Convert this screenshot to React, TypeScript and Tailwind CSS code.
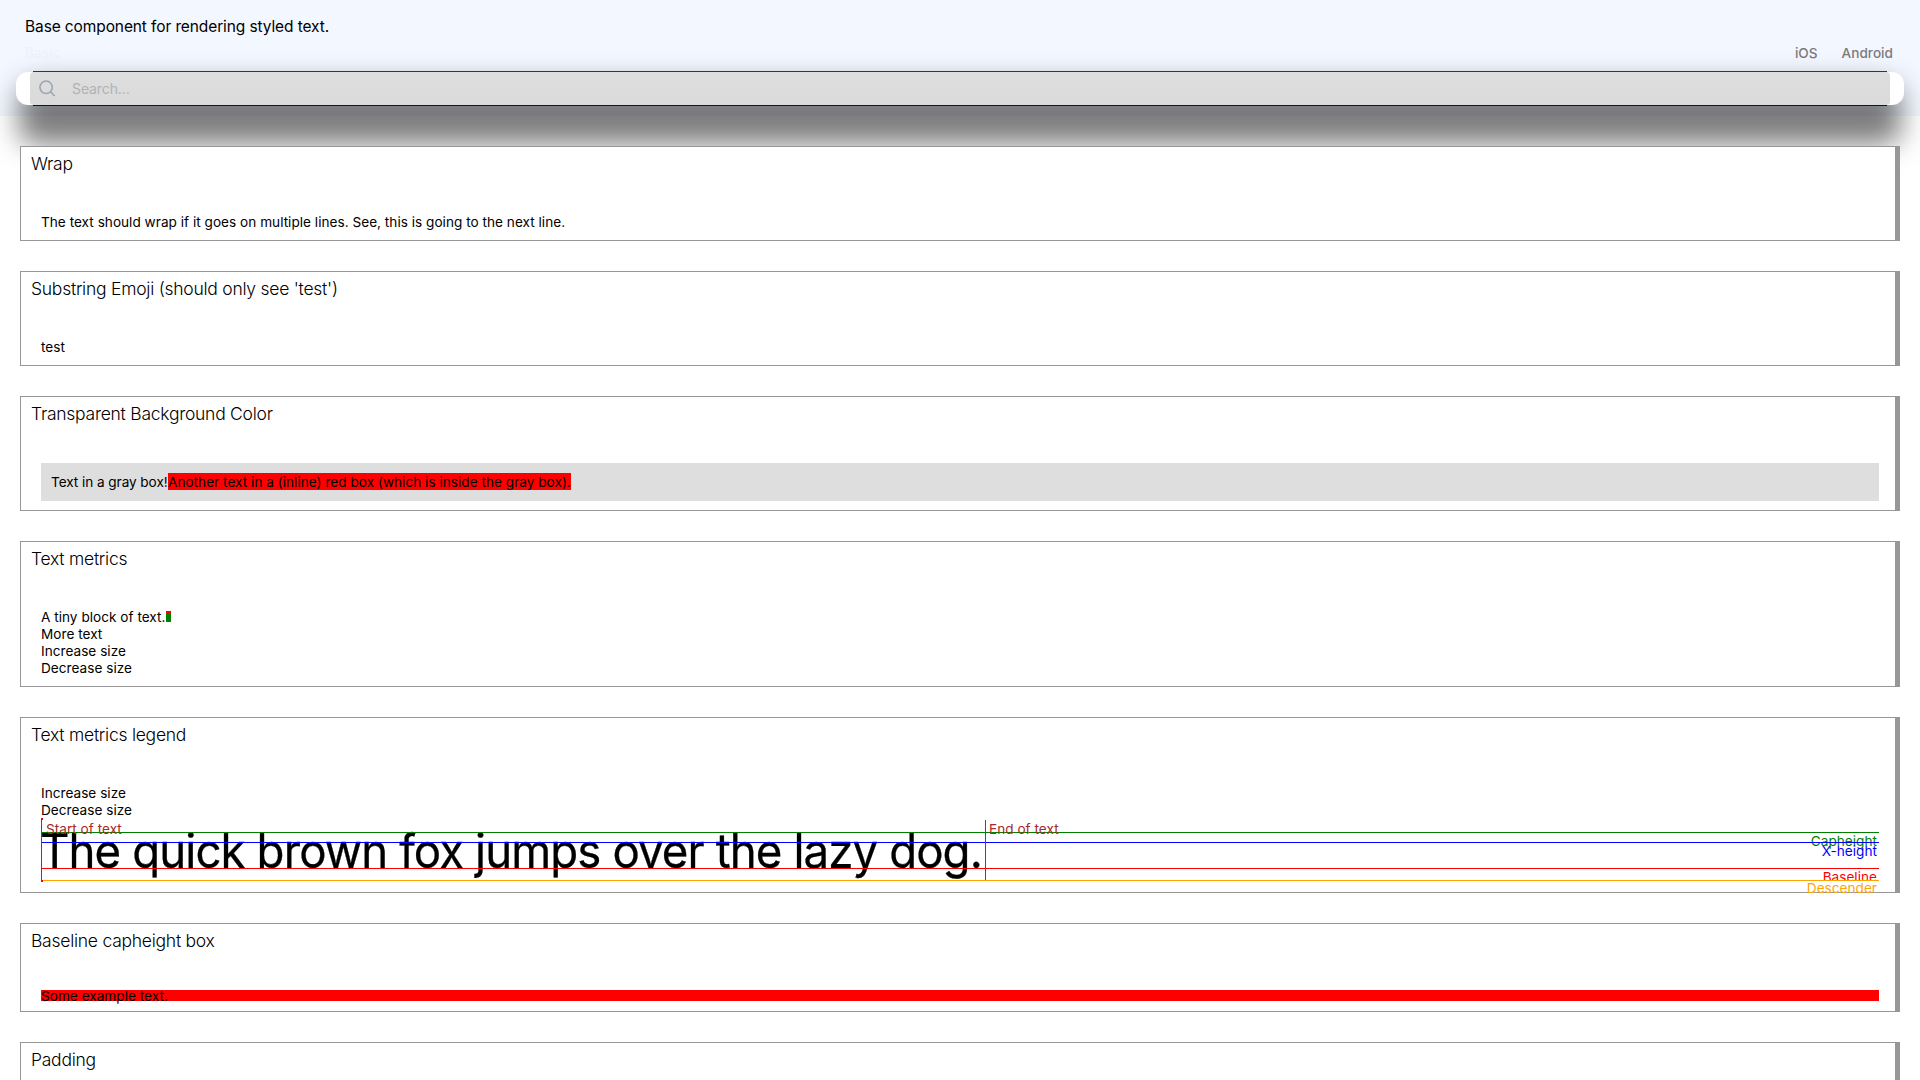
import React, { type ReactNode } from "react";

type CardProps = { title: string; children?: ReactNode; className?: string };

function Card({ title, children, className = "" }: CardProps) {
  return (
    <section
      className={`mb-[30px] shrink-0 border border-r-[5px] border-[#979797] bg-white pr-4 pb-2.5 pl-5 ${className}`}
    >
      <h2 className="-ml-2.5 mb-[34px] h-8 pt-[5px] text-[17.5px] leading-[24px] font-light tracking-[-0.25px]">
        {title}
      </h2>
      {children}
    </section>
  );
}

function Line({ children }: { children: ReactNode }) {
  return <p className="h-[17px] leading-[19px] whitespace-nowrap">{children}</p>;
}

function SearchBar() {
  return (
    <div className="relative mx-4 h-[33px]">
      <div className="absolute top-[12px] right-[3px] left-[3px] h-[60px] rounded-[16px] bg-black/51 blur-[14px]" />
      <div className="relative flex h-[33px] rounded-[12px] bg-white px-3.5">
        <div className="-my-px flex h-[35px] flex-1 flex-col">
          <div className="mx-[3px] h-px bg-[#33363b]" />
          <div className="flex h-[33px] items-center rounded-[4px] bg-linear-to-b from-[#dedede] to-[#dadada] pl-[9px]">
            <svg width="17" height="17" viewBox="0 0 17 17" fill="none" stroke="#9ca3af" strokeWidth="1.5">
              <circle cx="7.1" cy="7.3" r="6.2" />
              <path d="M11.5 11.8 15.6 16" />
            </svg>
            <span className="ml-4 text-[14px] leading-[18px] tracking-[-0.1px] text-[#b2b2b5]">Search...</span>
          </div>
          <div className="mx-[3px] h-px bg-[#161616]" />
        </div>
      </div>
    </div>
  );
}

export default function App() {
  return (
    <div className="h-[1080px] overflow-hidden bg-white font-['Inter',sans-serif] text-[13.6px] leading-[17px] tracking-[0.02px] text-black">
      <header className="flex h-[116px] flex-col bg-[#f3f7ff]">
        <p className="h-[43px] pt-[15px] pl-[25px] text-[15.5px] leading-[24px] tracking-[-0.11px]">
          Base component for rendering styled text.
        </p>
        <div className="flex h-[29px] items-start pr-[27px] pl-[25px] leading-[20px]">
          <span className="text-[13.8px] text-[#edf1fb]">Basic</span>
          <nav className="ml-auto flex gap-6 font-medium text-[#7b7b7d]">
            <span>iOS</span>
            <span>Android</span>
          </nav>
        </div>
        <SearchBar />
      </header>

      <main className="relative mt-[30px] flex flex-col px-5">
        <Card title="Wrap">
          <Line>The text should wrap if it goes on multiple lines. See, this is going to the next line.</Line>
        </Card>

        <Card title="Substring Emoji (should only see 'test')">
          <Line>test</Line>
        </Card>

        <Card title="Transparent Background Color" className="h-[115px]">
          <div className="flex h-[38px] items-start bg-[#dedede] p-2.5 leading-[19px]">
            <span className="h-[17px] w-[117px] whitespace-nowrap tracking-[-0.06px]">Text in a gray box!</span>
            <span className="h-[17px] w-[403px] whitespace-nowrap bg-[red] tracking-[0.02px]">
              Another text in a (inline) red box (which is inside the gray box).
            </span>
          </div>
        </Card>

        <Card title="Text metrics">
          <div className="flex h-[17px] leading-[19px]">
            <span className="w-[125px] whitespace-nowrap">A tiny block of text.</span>
            <span className="mt-[3px] h-[11px] w-[5px] border-t-[3px] border-t-[red] bg-[green]" />
          </div>
          <Line>More text</Line>
          <Line>Increase size</Line>
          <Line>Decrease size</Line>
        </Card>

        <Card title="Text metrics legend">
          <Line>Increase size</Line>
          <Line>Decrease size</Line>
          <div className="relative h-16">
            <p className="-ml-[1px] h-16 w-[944px] origin-left scale-x-95 text-[48px] leading-[65px] tracking-[-0.95px] whitespace-nowrap [-webkit-text-stroke:0.3px_black]">
              The quick brown fox jumps over the lazy dog.
            </p>
            <div className="absolute inset-x-0 top-[14px] h-px bg-[green]" />
            <div className="absolute top-[15px] right-[2px] leading-[17px] text-[green]">Capheight</div>
            <div className="absolute inset-x-0 top-[24px] h-px bg-[blue]" />
            <div className="absolute top-[25px] right-[2px] leading-[17px] text-[blue]">X-height</div>
            <div className="absolute inset-x-0 top-[50px] h-px bg-[red]" />
            <div className="absolute top-[51px] right-[2px] h-[11px] overflow-hidden leading-[17px] text-[red]">
              Baseline
            </div>
            <div className="absolute inset-x-0 top-[62px] h-px bg-[orange]" />
            <div className="absolute top-[62px] right-[2px] leading-[17px] text-[orange]">Descender</div>
            <div className="absolute top-0 left-0 h-16 w-px bg-[red]" />
            <div className="absolute top-0 left-px h-0.5 w-px bg-[red]" />
            <div className="absolute top-[62px] left-px h-0.5 w-px bg-[red]" />
            <div className="absolute top-[2px] left-0 h-[60px] w-px bg-[brown]" />
            <div className="absolute top-[3px] left-[5px] whitespace-nowrap text-[brown]">Start of text</div>
            <div className="absolute top-[2px] left-[944px] h-[60px] w-px bg-[brown]" />
            <div className="absolute top-[3px] left-[948px] whitespace-nowrap text-[brown]">End of text</div>
          </div>
        </Card>

        <Card title="Baseline capheight box">
          <div className="h-[11px] bg-[red]">
            <p className="-translate-y-[2px] whitespace-nowrap">Some example text.</p>
          </div>
        </Card>

        <Card title="Padding" className="h-[95px]" />
      </main>
    </div>
  );
}
